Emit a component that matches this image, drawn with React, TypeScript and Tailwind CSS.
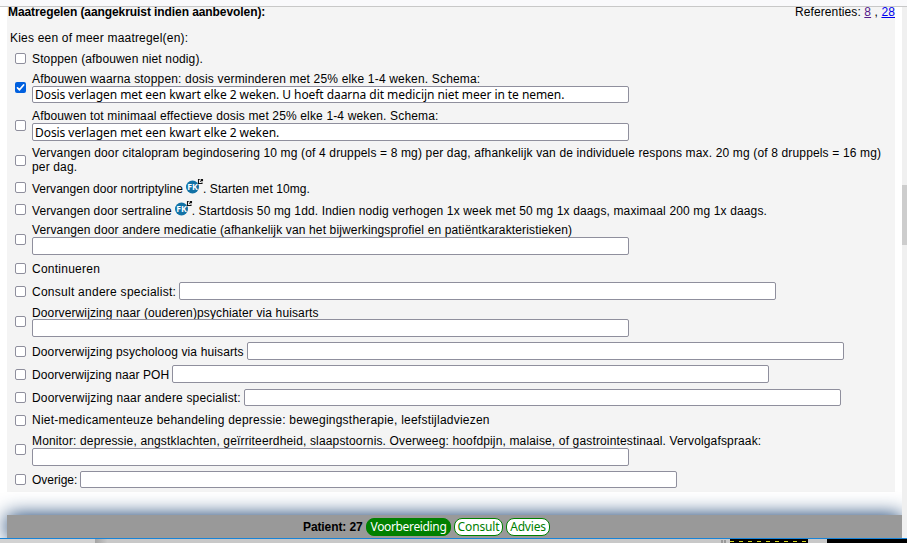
import type { ReactNode } from "react";

const arial = "font-['Liberation_Sans',Arial,sans-serif]";

function Check({ checked }: { checked?: boolean }) {
  return checked ? (
    <span className="flex size-[11px] shrink-0 rounded-[2px] bg-[#0060df]">
      <svg viewBox="0 0 11 11" className="size-[11px]" fill="none" stroke="white" strokeWidth="1.7" strokeLinecap="round" strokeLinejoin="round">
        <path d="M2.5 5.8 4.5 7.8 8.6 3" />
      </svg>
    </span>
  ) : (
    <span className="size-[11px] shrink-0 rounded-[2px] border border-[#8f8f9d] bg-white" />
  );
}

function Field({ h = "h-[18px]", value }: { h?: string; value?: string }) {
  return (
    <div className={`${h} flex w-[597px] shrink-0 items-center overflow-hidden rounded-[2px] border border-[#8f8f9d] bg-white pl-[2px] font-['Noto_Sans',sans-serif] text-[12px] leading-[15px] tracking-[-0.06px] whitespace-pre`}>
      {value}
    </div>
  );
}

function Row({ h, checked, children }: { h: string; checked?: boolean; children: ReactNode }) {
  return (
    <div className={`${h} flex shrink-0 items-center gap-[6px] pl-2`}>
      <Check checked={checked} />
      {children}
    </div>
  );
}

function T({ children, className = "" }: { children: ReactNode; className?: string }) {
  return <span className={`whitespace-pre ${className}`}>{children}</span>;
}

function FK() {
  return (
    <svg viewBox="0 0 18 16" className="mb-[3px] ml-[3px] inline-block h-4 w-[18px] shrink-0 overflow-visible">
      <circle cx="6.5" cy="9" r="6.5" fill="#1272a6" />
      <text x="6.5" y="12.4" textAnchor="middle" fontSize="9.5" fontWeight="700" fill="white" fontFamily="Open Sans, sans-serif" textLength="10.5" lengthAdjust="spacingAndGlyphs">FK</text>
      <path d="M13.7 1.5H12.5V5.5H16V4.4M14.3 3.7 16 2M14.7 1.5H16.5V3.3" fill="none" stroke="#111" strokeWidth="1.1" />
    </svg>
  );
}

export default function App() {
  return (
    <div className={`${arial} flex h-[543px] w-[907px] flex-col overflow-hidden bg-white text-[12px] leading-[14px] text-black`}>
      <div className="h-[7px] shrink-0 border-b border-[#c8c8c8] bg-[#f9f9fb]" />
      <div className="flex h-[531px] shrink-0">
        <div className="flex w-[902px] flex-col pl-[7px]">
          <main className="flex h-[485px] w-[888px] shrink-0 flex-col bg-[#f4f4f4]">
            <div className="flex h-[22px] shrink-0 justify-between pl-px leading-[10px]">
              <T className="font-bold tracking-[-0.08px]">Maatregelen (aangekruist indien aanbevolen):</T>
              <span className="tracking-[0.1px] whitespace-pre">Referenties: <a className="text-[#551a8b] underline">8</a> , <a className="text-[#0000ee] underline">28</a></span>
            </div>
            <div className="h-[21px] shrink-0 pt-[2px] pl-[3px]"><T className="tracking-[0.2px]">Kies een of meer maatregel(en):</T></div>
            <Row h="h-[17px]"><T className="tracking-[0.14px]">Stoppen (afbouwen niet nodig).</T></Row>
            <Row h="h-[40px]" checked>
              <div className="flex flex-col"><T className="tracking-[0.173px]">Afbouwen waarna stoppen: dosis verminderen met 25% elke 1-4 weken. Schema:</T>
                <Field h="h-[17px]" value="Dosis verlagen met een kwart elke 2 weken. U hoeft daarna dit medicijn niet meer in te nemen." /></div>
            </Row>
            <Row h="h-[36px]">
              <div className="flex flex-col"><T className="tracking-[0.15px]">Afbouwen tot minimaal effectieve dosis met 25% elke 1-4 weken. Schema:</T>
                <Field value="Dosis verlagen met een kwart elke 2 weken." /></div>
            </Row>
            <Row h="h-[34px]">
              <div className="flex flex-col tracking-[0.15px]"><T>Vervangen door citalopram begindosering 10 mg (of 4 druppels = 8 mg) per dag, afhankelijk van de individuele respons max. 20 mg (of 8 druppels = 16 mg)</T><T>per dag.</T></div>
            </Row>
            <Row h="h-[21px]"><div className="flex items-center"><T className="pt-[2px] tracking-[0.03px]">Vervangen door nortriptyline</T><FK /><T className="-ml-px pt-[2px] tracking-[0.09px]">. Starten met 10mg.</T></div></Row>
            <Row h="h-[23px]"><div className="flex items-center"><T className="pt-[2px] tracking-[0.09px]">Vervangen door sertraline</T><FK /><T className="-ml-px pt-[2px] tracking-[0.138px]">. Startdosis 50 mg 1dd. Indien nodig verhogen 1x week met 50 mg 1x daags, maximaal 200 mg 1x daags.</T></div></Row>
            <Row h="h-[36px]">
              <div className="flex flex-col"><T className="tracking-[0.14px]">Vervangen door andere medicatie (afhankelijk van het bijwerkingsprofiel en patiëntkarakteristieken)</T><Field /></div>
            </Row>
            <Row h="h-[23px]"><T className="tracking-[0.25px]">Continueren</T></Row>
            <Row h="h-[22px]"><div className="flex items-center gap-[3px]"><T className="pt-px tracking-[0.26px]">Consult andere specialist:</T><Field /></div></Row>
            <Row h="h-[38px]">
              <div className="flex flex-col"><T className="pt-[2px] leading-[12px] tracking-[0.125px]">Doorverwijzing naar (ouderen)psychiater via huisarts</T><Field /></div>
            </Row>
            <Row h="h-[22px]"><div className="flex items-center gap-[3px]"><T className="pt-px tracking-[0.13px]">Doorverwijzing psycholoog via huisarts</T><Field /></div></Row>
            <Row h="h-[24px]"><div className="flex items-center gap-[3px]"><T className="pt-px tracking-[0.08px]">Doorverwijzing naar POH</T><Field /></div></Row>
            <Row h="h-[23px]"><div className="flex items-center gap-[3px]"><T className="tracking-[0.16px]">Doorverwijzing naar andere specialist:</T><Field h="h-[17px]" /></div></Row>
            <Row h="h-[22px]"><T className="tracking-[0.23px]">Niet-medicamenteuze behandeling depressie: bewegingstherapie, leefstijladviezen</T></Row>
            <Row h="h-[37px]">
              <div className="flex flex-col"><T className="tracking-[0.15px]">Monitor: depressie, angstklachten, geïrriteerdheid, slaapstoornis. Overweeg: hoofdpijn, malaise, of gastrointestinaal. Vervolgafspraak:</T><Field /></div>
            </Row>
            <Row h="h-[23px]"><div className="flex items-center gap-[3px]"><T>Overige:</T><Field h="h-[17px]" /></div></Row>
          </main>
          <footer className="mt-[23px] flex h-[23px] w-[895px] shrink-0 items-center bg-[#999] pl-[296px] shadow-[0_0_20px_#0a3468]">
            <T className="w-[63px] font-bold tracking-[-0.1px]">Patient: 27</T>
            <div className="flex gap-[3px] font-['Noto_Sans',sans-serif] text-[12px]">
              <span className="flex h-[18px] w-[85px] items-center justify-center rounded-[8px] border border-[#008000] bg-[#008000] tracking-[-0.35px] text-white">Voorbereiding</span>
              <span className="flex h-[18px] w-[49px] items-center justify-center rounded-[8px] border border-[#008000] bg-white tracking-[-0.15px] text-[#008000]">Consult</span>
              <span className="flex h-[18px] w-[44px] items-center justify-center rounded-[8px] border border-[#008000] bg-white tracking-[-0.2px] text-[#008000]">Advies</span>
            </div>
          </footer>
        </div>
        <div className="z-10 w-[5px] bg-[#f0f0f0] pt-[178px]"><div className="h-[60px] bg-[#cdcdcd]" /></div>
      </div>
      <div className="z-10 h-px shrink-0 bg-[#1883d7]" />
      <div className="z-10 flex h-1 shrink-0 bg-[#c8c8c8]">
        <div className="w-[95px] bg-[#d2d2d2]" />
        <div className="w-[626px] bg-gradient-to-r from-[#a4a4a4] via-[#c8c8c8] via-[2%] to-[#c8c8c8]" />
        <div className="flex w-[9px] gap-px pt-px"><i className="h-[3px] w-[2px] bg-[#999]" /><i className="h-[3px] w-[2px] bg-[#999]" /></div>
        <div className="w-[78px] bg-black pt-[2px]">
          <div className="h-px bg-[repeating-linear-gradient(90deg,#d8d820_0_4px,#000_4px_9px)]" />
        </div>
        <div className="w-[19px]" />
        <div className="w-[80px] bg-black" />
      </div>
    </div>
  );
}
